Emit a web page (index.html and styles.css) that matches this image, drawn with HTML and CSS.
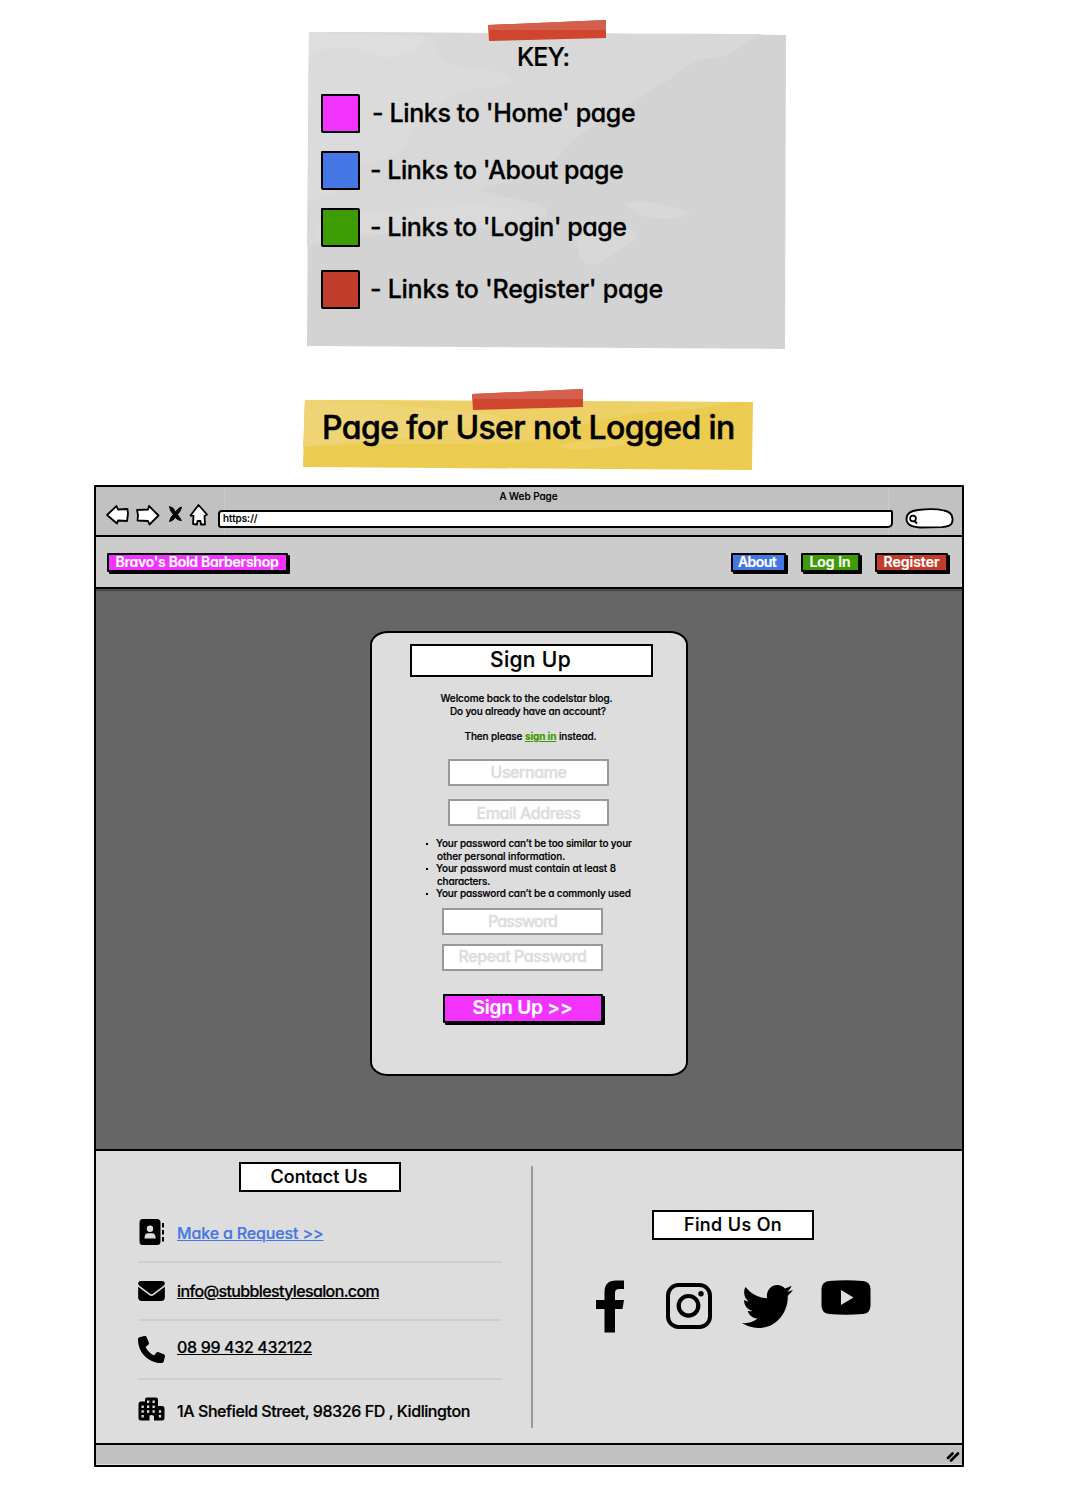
FILE: index.html
```html
<!DOCTYPE html>
<html lang="en">
<head>
<meta charset="utf-8">
<title>Barbershop sign up wireframe</title>
<link rel="stylesheet" href="styles.css">
</head>
<body>
<section class="note note-key">
  <svg class="paper" viewBox="0 0 480 318" width="480" height="318" aria-hidden="true">
    <path d="M2 0 479 3 478 317 0 314Z" fill="#d3d3d3"/>
    <path d="M2 0 455 2C420 20 425 24 410 25 370 32 385 35 355 52 315 72 322 78 290 92 250 115 250 130 243 143 225 148 180 150 175 158 210 170 245 170 240 183 190 205 120 190 0 214Z" fill="#d8d8d8"/>
    <path d="M2 0 118 3C130 8 125 20 140 30 165 42 200 35 205 48 195 60 170 50 150 62 130 70 130 85 108 95 95 110 110 115 80 126 50 130 40 145 30 160L1 170Z" fill="#dbdbdb"/>
    <path d="M10 190C60 180 160 165 230 180 170 195 50 195 10 210Z" fill="#dadada"/>
    <path d="M318 171C335 167 375 174 382 182 365 192 325 187 318 171ZM273 190C310 185 325 195 330 205 320 215 305 220 295 230 270 240 268 215 273 190Z" fill="#d8d8d8"/>
    <path d="M2 25C20 12 45 12 75 26 95 25 115 18 117 5L2 0Z" fill="#dedede"/>
  </svg>
  <svg class="tape tape-key" viewBox="0 0 119 22" width="119" height="22" aria-hidden="true"><path d="M0 5 118 0V18L1 21Z" fill="#d0452e"/><path d="M0 5 118 0V10L0 10Z" fill="#d35f4c"/></svg>
  <h2 class="key-title"><span class="t w-key">KEY:</span></h2>
  <ul class="key-list">
    <li class="key-row row-home"><i class="swatch pink"></i><span class="t w-home">- Links to 'Home' page</span></li>
    <li class="key-row row-about"><i class="swatch blue"></i><span class="t w-aboutp">- Links to 'About page</span></li>
    <li class="key-row row-login"><i class="swatch green"></i><span class="t w-loginp">- Links to 'Login' page</span></li>
    <li class="key-row row-register"><i class="swatch red"></i><span class="t w-regp">- Links to 'Register' page</span></li>
  </ul>
</section>

<section class="note note-title">
  <svg class="paper" viewBox="0 0 450 70" width="450" height="70" aria-hidden="true">
    <path d="M2 0 450 2 449 70 0 67Z" fill="#ebcb50"/>
    <path d="M2 0 425 2C400 12 340 10 310 18 260 26 260 34 230 41 200 46 60 42 0 47Z" fill="#edd167"/>
    <path d="M2 0 75 3C110 10 180 8 200 18 190 28 130 30 100 38L1 46Z" fill="#eed474"/>
    <path d="M255 46C270 38 320 40 345 41 320 46 270 54 255 46Z" fill="#edd163"/>
  </svg>
  <svg class="tape tape-title" viewBox="0 0 112 22" width="112" height="22" aria-hidden="true"><path d="M0 5 111 0V18L1 21Z" fill="#d0452e"/><path d="M0 5 111 0V10L0 10Z" fill="#d35f4c"/></svg>
  <h1 class="page-title"><span class="t w-title">Page for User not Logged in</span></h1>
</section>

<main class="window">
  <div class="toolbar">
    <div class="window-title"><span class="t w-web">A Web Page</span></div>
    <div class="tools">
      <svg class="tool-icons" viewBox="105 502 104 25" width="104" height="25" aria-hidden="true">
        <g fill="#fff" stroke="#000" stroke-width="1.8" stroke-linejoin="round">
          <path d="M107 515 116.500 506 118 509.500 127.500 509 128 514 127 521 118 520.500 117 523.500Z"/>
          <path d="M158.500 515.500 149 506 148 509.500 137 510 138 515 137.500 520.500 148 521 149.500 524.500Z"/>
          <path d="M198.500 505 207 514.500 204.500 516 205 524.500 201 524.500 200.500 521 197.500 521 197 524.500 193 524 193.500 516 190.500 515.500Z"/>
        </g>
        <path d="M169.500 506.500Q173.500 507 175.500 512 178.500 507.500 181.500 507 181 511 177.500 514.500L181.500 520.500Q177.500 520.500 175.300 517.500 173 521 169.500 521.500 170.500 517 173.300 514.500 170 511 169.500 506.500Z" stroke="#000" stroke-width="1" stroke-linejoin="round"/>
      </svg>
      <div class="url"><span class="t w-https">https://</span></div>
      <svg class="search" viewBox="0 0 50 21" width="50" height="21" aria-hidden="true">
        <path d="M13 2C22 .800 33 1 39 2.500 46 4 48 7 47.500 12 47.500 17 44 18.500 37 19.200L15 19.500C6 19 1.500 16 1.500 11 1.500 6 5 2.800 13 2Z" fill="#fff" stroke="#000" stroke-width="1.800"/>
        <circle cx="8" cy="10.500" r="2.900" fill="none" stroke="#000" stroke-width="1.700"/><path d="M9.500 13 12 15.500" stroke="#000" stroke-width="2"/>
      </svg>
    </div>
  </div>

  <header class="site-header">
    <a class="btn pink b-brand"><span class="t w-brand">Bravo's Bold Barbershop</span></a>
    <nav class="nav">
      <a class="btn blue b-about"><span class="t w-about">About</span></a>
      <a class="btn green b-login"><span class="t w-login">Log In</span></a>
      <a class="btn red b-register"><span class="t w-register">Register</span></a>
    </nav>
  </header>

  <section class="hero">
    <form class="card">
      <h2 class="box card-title"><span class="t w-signup">Sign Up</span></h2>
      <p class="intro"><span class="t w-wel">Welcome back to the codelstar blog.</span></p>
      <p class="intro intro-2"><span class="t w-do">Do you already have an account?</span></p>
      <p class="intro intro-3"><span class="t w-then">Then please <a class="signin">sign in</a> instead.</span></p>
      <div class="field f-user"><span class="t w-user">Username</span></div>
      <div class="field f-email"><span class="t w-email">Email Address</span></div>
      <ul class="rules">
        <li><span class="t w-r1">Your password can’t be too similar to your</span><br><span class="t w-r2 hang">other personal information.</span></li>
        <li><span class="t w-r3">Your password must contain at least 8</span><br><span class="t w-r4 hang">characters.</span></li>
        <li><span class="t w-r5">Your password can’t be a commonly used</span></li>
      </ul>
      <div class="field f-pass"><span class="t w-pass">Password</span></div>
      <div class="field f-repeat"><span class="t w-repeat">Repeat Password</span></div>
      <div class="btn pink submit"><span class="t w-submit">Sign Up &gt;&gt;</span></div>
    </form>
  </section>

  <footer class="footer">
    <section class="contact">
      <h3 class="box box-contact"><span class="t w-contact">Contact Us</span></h3>
      <ul class="contact-list">
        <li>
          <svg viewBox="0 0 27 28" width="27" height="28" aria-hidden="true"><path fill-rule="evenodd" d="M4.500 1H19Q22.500 1 22.500 4.500V23.500Q22.500 27 19 27H4.500Q1.500 27 1.500 23.500V4.500Q1.500 1 4.500 1ZM12 7.500A3.200 3.200 0 1 0 12 13.900 3.200 3.200 0 1 0 12 7.500ZM6.500 20.500H17.700Q17.700 15.300 14 15.300H10.200Q6.500 15.300 6.500 20.500Z"/><path d="M25 5V9.500M25 12V16.500M25 19V23.500" stroke="#000" stroke-width="2"/></svg>
          <a class="request"><span class="t w-make">Make a Request &gt;&gt;</span></a></li>
        <li>
          <svg viewBox="0 64 512 384" width="27" height="20" aria-hidden="true"><path d="M48 64C21.500 64 0 85.500 0 112c0 15.100 7.100 29.300 19.200 38.400L236.800 313.600c11.400 8.500 27 8.500 38.400 0L492.800 150.400c12.100-9.100 19.200-23.300 19.200-38.400c0-26.500-21.500-48-48-48H48zM0 176V384c0 35.300 28.700 64 64 64H448c35.300 0 64-28.700 64-64V176L294.400 339.200c-22.800 17.100-54 17.100-76.800 0L0 176z"/></svg>
          <a class="line mail"><span class="t w-info">info@stubblestylesalon.com</span></a></li>
        <li>
          <svg class="phone" viewBox="0 0 512 512" width="27" height="27" aria-hidden="true"><path d="M164.900 24.600c-7.700-18.600-28-28.500-47.400-23.200l-88 24C12.100 30.200 0 46 0 64C0 311.400 200.600 512 448 512c18 0 33.800-12.100 38.600-29.500l24-88c5.300-19.400-4.600-39.700-23.200-47.400l-96-40c-16.300-6.800-35.200-2.100-46.300 11.600L304.700 368C234.300 334.700 177.300 277.700 144 207.300L193.300 167c13.700-11.200 18.400-30 11.600-46.300l-40-96z"/></svg>
          <a class="line tel"><span class="t w-phone">08 99 432 432122</span></a></li>
        <li class="address">
          <svg class="city" viewBox="0 0 27 24" width="27" height="24" aria-hidden="true"><path fill-rule="evenodd" d="M9 .500H18Q20 .500 20 2.500V9H24Q26.500 9 26.500 11.500V21Q26.500 23.500 24 23.500H16V19.500Q16 18 13.500 18T11.500 19.500V23.500H3Q.500 23.500 .500 21V7Q.500 4.500 3 4.500H7V2.500Q7 .500 9 .500ZM9 3.500V6H11.300V3.500ZM14.500 3.500V6H16.800V3.500ZM3.500 8.500V11H5.800V8.500ZM9 8.500V11H11.300V8.500ZM14.500 8.500V11H16.800V8.500ZM3.500 13.300V15.800H5.800V13.300ZM9 13.300V15.800H11.300V13.300ZM14.500 13.300V15.800H16.800V13.300ZM20.800 13.300V15.800H23.100V13.300ZM3.500 18V20.500H5.800V18ZM20.800 18V20.500H23.100V18Z"/></svg>
          <span class="t w-addr">1A Shefield Street, 98326 FD , Kidlington</span></li>
      </ul>
    </section>
    <section class="social">
      <h3 class="box box-find"><span class="t w-find">Find Us On</span></h3>
      <div class="social-icons">
        <svg class="fb" viewBox="0 0 28 53" width="28" height="53" aria-hidden="true"><path d="M28 .500V9H23Q19 9 19 13V20H28L26.500 29H19V52.500H8.500V29H0V20H8.500V12Q8.500 .500 20 .500Z"/></svg>
        <svg class="ig" viewBox="0 0 46 46" width="46" height="46" aria-hidden="true"><rect x="2" y="2" width="42" height="42" rx="10.500" fill="none" stroke="#000" stroke-width="4"/><circle cx="22.500" cy="22.800" r="9.800" fill="none" stroke="#000" stroke-width="4.200"/><circle cx="35" cy="10.800" r="2.700"/></svg>
        <svg class="tw" viewBox="0 48 512 416" width="51" height="43" preserveAspectRatio="none" aria-hidden="true"><path d="M459.370 151.716c.325 4.548.325 9.097.325 13.645 0 138.720-105.583 298.558-298.558 298.558-59.452 0-114.680-17.219-161.137-47.106 8.447.974 16.568 1.299 25.340 1.299 49.055 0 94.213-16.568 130.274-44.832-46.132-.975-84.792-31.188-98.112-72.772 6.498.974 12.995 1.624 19.818 1.624 9.421 0 18.843-1.300 27.614-3.573-48.081-9.747-84.143-51.980-84.143-102.985v-1.299c13.969 7.797 30.214 12.670 47.431 13.319-28.264-18.843-46.781-51.005-46.781-87.391 0-19.492 5.197-37.360 14.294-52.954 51.655 63.675 129.300 105.258 216.365 109.807-1.624-7.797-2.599-15.918-2.599-24.040 0-57.828 46.782-104.934 104.934-104.934 30.213 0 57.502 12.670 76.670 33.137 23.715-4.548 46.456-13.320 66.599-25.340-7.798 24.366-24.366 44.833-46.132 57.827 21.117-2.273 41.584-8.122 60.426-16.243-14.292 20.791-32.161 39.308-52.628 54.253z"/></svg>
        <svg class="yt" viewBox="0 0 50 35" width="50" height="35" aria-hidden="true"><path fill-rule="evenodd" d="M8 1Q25-.500 42 1 49 1.500 49.500 9V26Q49 33.500 42 34 25 35.500 8 34 1 33.500 .500 26V9Q1 1.500 8 1ZM20 10V25L32.500 17.500Z"/></svg>
      </div>
    </section>
  </footer>
  <div class="statusbar"><svg viewBox="0 0 14 12" width="14" height="12" aria-hidden="true"><path d="M2 8 6.500 3.500M5 10.500 12 3.500" stroke="#000" stroke-width="2.600" stroke-linecap="round"/></svg></div>
</main>
</body>
</html>
```
FILE: styles.css
```css
* { box-sizing: border-box; }
body {
  display: flow-root;
  margin: 0;
  width: 1066px;
  height: 1506px;
  background: #fff;
  color: #000;
  font-family: Inter, "Noto Sans", sans-serif;
  font-weight: 500;
  font-feature-settings: "cv11";
}
h1, h2, h3, p, ul { margin: 0; padding: 0; font-weight: 500; }
ul { list-style: none; }
svg { display: block; flex: none; }
.t { white-space: nowrap; -webkit-text-stroke: 0.2px currentColor; }

.pink { background: #f233ff; }
.blue { background: #4476e4; }
.green { background: #3d9b04; }
.red { background: #c23c2b; }

/* sticky notes */
.note { position: relative; }
.paper { position: absolute; left: 0; top: 0; z-index: -1; }
.tape { position: absolute; }
.note-key { display: flow-root; width: 480px; height: 317px; margin: 32px 0 0 307px; padding-top: 10px; }
.tape-key { left: 181px; top: -12px; }
.key-title { padding-left: 210px; font-size: 25px; line-height: 30px; }
.key-list { padding: 22px 0 0 14px; font-size: 25px; }
.key-row { display: flex; align-items: center; height: 39px; margin-bottom: 18px; gap: 10px; line-height: 30px; }
.row-home { gap: 12px; }
.row-login { margin-bottom: 23px; }
.key-row .t { padding-bottom: 2px; -webkit-text-stroke-width: 0.3px; }
.swatch { flex: none; width: 39px; height: 39px; border: 2px solid #000; border-radius: 1px 2px 1px 2px; }

.note-title { width: 450px; height: 70px; margin: 51px 0 0 303px; padding: 8px 0 0 19px; }
.tape-title { left: 169px; top: -11px; }
.page-title { font-size: 32px; line-height: 40px; }
.page-title .t { -webkit-text-stroke-width: 0.5px; }

/* letter fit of each label */
.w-key { letter-spacing: -0.9px; }
.w-home { letter-spacing: -0.37px; }
.w-aboutp { letter-spacing: -0.46px; }
.w-loginp { letter-spacing: -0.46px; }
.w-regp { letter-spacing: -0.26px; }
.w-title { letter-spacing: -0.6px; }
.w-web { letter-spacing: -0.06px; }
.w-brand { letter-spacing: -0.25px; }
.w-about { letter-spacing: -0.55px; }
.w-signup { letter-spacing: 0.34px; }
.w-wel { letter-spacing: -0.09px; }
.w-do { letter-spacing: -0.16px; }
.w-then { letter-spacing: -0.11px; }
.w-user { letter-spacing: -0.42px; }
.w-email { letter-spacing: -0.43px; }
.w-r1 { letter-spacing: -0.15px; }
.w-r2 { letter-spacing: -0.1px; }
.w-r3 { letter-spacing: -0.11px; }
.w-r4 { letter-spacing: -0.19px; }
.w-r5 { letter-spacing: -0.16px; }
.w-pass { letter-spacing: -0.84px; }
.w-repeat { letter-spacing: -0.41px; }
.w-submit { letter-spacing: -0.18px; }
.w-contact { letter-spacing: 0.07px; }
.w-make { letter-spacing: -0.15px; }
.w-info { letter-spacing: -0.63px; }
.w-phone { letter-spacing: -0.34px; }
.w-addr { letter-spacing: -0.42px; }
.w-find { letter-spacing: 0.37px; }

/* browser window */
.window { width: 870px; height: 982px; margin: 15px 0 0 94px; border: 2px solid #000; border-radius: 1px; background: #ddd; }
.toolbar {
  height: 50px;
  border-bottom: 2px solid #000;
  background:
    linear-gradient(#cacaca, #cacaca) 128px 0 / 1px 100% no-repeat,
    linear-gradient(#cacaca, #cacaca) 792px 0 / 1px 100% no-repeat,
    #c1c1c1;
}
.window-title { padding: 3px 1px 0 0; font-size: 10px; line-height: 12px; text-align: center; }
.tools { display: flex; height: 25px; padding-left: 9px; }
.url { width: 675px; height: 18px; margin: 8px 0 0 9px; padding-left: 3px; border: 2px solid #000; border-radius: 4px 2px 5px 3px; background: #fff; font-size: 10px; line-height: 13px; }
.search { margin: 6px 0 0 12px; }
.site-header { display: flex; justify-content: space-between; height: 52px; padding: 16px 14px 0 11px; background: #ccc; border-bottom: 2px solid #000; }
.btn { display: flex; align-items: center; justify-content: center; border: 2px solid #000; border-radius: 1px; box-shadow: 2px 2px 0 #000; color: #fff; font-weight: 600; }
.site-header .btn { height: 19px; padding: 0 1px 2px 0; font-size: 14px; line-height: 15px; }
.b-brand { width: 181px; }
.nav { display: flex; gap: 15px; }
.site-header .b-about { width: 55px; padding-right: 3px; }
.b-login { width: 59px; }
.site-header .b-register { width: 73px; padding-right: 0; }

.hero { height: 562px; padding: 42px 0 0 274px; background: #666; border-bottom: 2px solid #000; box-shadow: inset 0 2px 0 #4a4a4a; }
.card { display: flow-root; width: 318px; height: 445px; padding-top: 11px; border: 2px solid #000; border-radius: 18px / 14px; background: #ddd; }
.box { display: flex; align-items: center; justify-content: center; border: 2px solid #000; background: #fff; }
.card-title { width: 243px; height: 33px; margin-left: 38px; padding: 0 2px 2px 0; font-size: 21px; line-height: 26px; }
.intro { margin: 15px 5px 0 0; font-size: 10px; line-height: 13px; text-align: center; }
.intro-2 { margin: 0 2px 0 0; }
.intro-3 { margin: 12px 0 0 3px; }
.signin { color: #3d9b04; font-weight: 700; text-decoration: underline; }
.field { display: flex; align-items: center; justify-content: center; width: 161px; height: 27px; margin-left: 76px; padding-bottom: 2px; border: 2px solid #999; background: #fff; color: #ddd; font-size: 16px; line-height: 20px; }
.field .t { -webkit-text-stroke-width: 0.5px; }
.f-user { margin-top: 16px; }
.f-email { margin-top: 13px; padding-bottom: 0; }
.rules { margin: 11px 0 0 64px; font-size: 10px; line-height: 12.5px; }
.rules li { position: relative; }
.rules li::before { content: ""; position: absolute; left: -10px; top: 6px; width: 2px; height: 2px; background: #000; }
.hang { margin-left: 1px; }
.f-pass { margin: 8px 0 0 70px; padding-bottom: 0; }
.f-repeat { margin: 9px 0 0 70px; }
.submit { width: 160px; height: 29px; margin: 23px 0 0 71px; padding-right: 1px; font-size: 19px; line-height: 24px; }

/* footer */
.footer { display: flex; height: 294px; border-bottom: 2px solid #000; }
.contact { width: 437px; height: 262px; margin-top: 15px; padding-left: 42px; border-right: 2px solid #999; border-radius: 1px; }
.box-contact { width: 162px; height: 30px; margin: -4px 0 0 101px; padding: 0 2px 1px 0; font-size: 18px; line-height: 22px; }
.contact-list { width: 364px; padding-top: 12px; font-size: 16px; line-height: 20px; }
.contact-list li { display: flex; align-items: center; gap: 12px; height: 58.7px; border-bottom: 2px solid #cfcfcf; }
.contact-list .address { border-bottom: 0; }
.request { padding-top: 2px; color: #4476e4; text-decoration: underline; }
.line { text-decoration: underline; }
.mail { padding-bottom: 1px; }
.tel { padding-bottom: 5px; }
.w-addr { padding-top: 3px; }
.box-find { width: 162px; height: 30px; margin: 59px 0 0 119px; padding-bottom: 1px; font-size: 18px; line-height: 22px; }
.social-icons { display: flex; align-items: flex-start; padding: 40px 0 0 63px; }
.ig { margin: 3px 0 0 42px; }
.tw { margin: 5px 0 0 30px; }
.yt { margin-left: 28px; }
.statusbar { display: flex; justify-content: flex-end; height: 19px; padding: 5px 2px 0 0; background: #c1c1c1; }
```
